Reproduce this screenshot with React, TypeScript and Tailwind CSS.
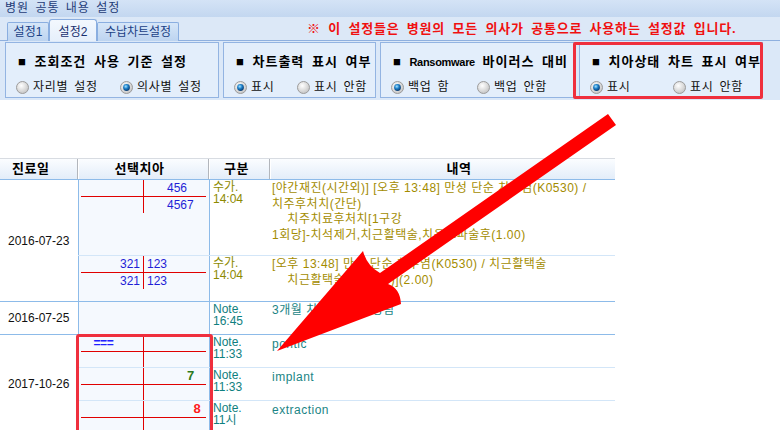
import React from "react";

type Mark = { n: number; c: string; cls?: string };

const Radio = ({ on = false }: { on?: boolean }) => (
  <svg width="13" height="13" viewBox="0 0 13 13" className="shrink-0">
    <defs>
      <radialGradient id="rbg" cx="40%" cy="35%" r="70%">
        <stop offset="0" stopColor="#ffffff" />
        <stop offset="1" stopColor="#c2c2c2" />
      </radialGradient>
      <radialGradient id="rdot" cx="40%" cy="35%" r="65%">
        <stop offset="0" stopColor="#a8e4ff" />
        <stop offset="0.5" stopColor="#1b7fc9" />
        <stop offset="1" stopColor="#0a3b70" />
      </radialGradient>
    </defs>
    <circle cx="6.5" cy="6.5" r="6" fill="url(#rbg)" stroke="#9c9c9c" />
    {on && <circle cx="6.5" cy="6.5" r="3.4" fill="url(#rdot)" />}
  </svg>
);

const Opt = ({ label, on, w }: { label: string; on?: boolean; w: string }) => (
  <div className={`flex items-center gap-[4px] ${w}`}>
    <Radio on={on} />
    <span className="whitespace-nowrap text-[12px] leading-[16px] tracking-[0.7px] text-[#111] [word-spacing:2px]">
      {label}
    </span>
  </div>
);

const Panel = ({
  title,
  a,
  b,
  aw,
  on,
  w,
}: {
  title: React.ReactNode;
  a: string;
  b: string;
  aw: string;
  on: 0 | 1;
  w: string;
}) => (
  <div className={`h-[56px] shrink-0 overflow-hidden border border-[#93b4e2] bg-[#e3eefb] pt-[11px] ${w}`}>
    <div className="ml-[12px] whitespace-nowrap text-[13px] font-bold leading-[16px] tracking-[1px] text-black [word-spacing:3px]">
      ■ {title}
    </div>
    <div className="mt-[9px] flex pl-[10px]">
      <Opt label={a} on={on === 0} w={aw} />
      <Opt label={b} on={on === 1} w="" />
    </div>
  </div>
);

const Quad = ({ marks = [], left = false }: { marks?: Mark[]; left?: boolean }) => (
  <div
    className={
      left
        ? "flex w-[63px] shrink-0 flex-row-reverse border-r border-[#e00000] pr-[3px]"
        : "flex w-[62px] shrink-0 pl-[3px]"
    }
  >
    {[1, 2, 3, 4, 5, 6, 7, 8].map((n) => {
      const m = marks.find((x) => x.n === n);
      return (
        <span key={n} className={`w-[6.67px] shrink-0 text-center ${m?.cls ?? "text-[#1f1fd6]"}`}>
          {m?.c}
        </span>
      );
    })}
  </div>
);

const Chart = ({ ul, ur, ll, lr }: { ul?: Mark[]; ur?: Mark[]; ll?: Mark[]; lr?: Mark[] }) => (
  <div className="ml-[2px] flex w-[125px] flex-col text-[12px] leading-[16px]">
    <div className="flex h-[16px]">
      <Quad left marks={ul} />
      <Quad marks={ur} />
    </div>
    <div className="h-px bg-[#e00000]" />
    <div className="flex h-[16px]">
      <Quad left marks={ll} />
      <Quad marks={lr} />
    </div>
  </div>
);

const m = (s: string, from: number): Mark[] => s.split("").map((c, i) => ({ n: from + i, c }));
const mr = (s: string): Mark[] =>
  s
    .split("")
    .reverse()
    .map((c, i) => ({ n: i + 1, c }));

type Sub = {
  h: string;
  chart: React.ReactNode;
  kind: string[];
  kindCls: string;
  text: React.ReactNode;
};

const Group = ({ date, subs }: { date: string; subs: Sub[] }) => (
  <div className="flex border-b border-[#8dbbe9]">
    <div className="flex w-[78px] shrink-0 items-center pl-[8px] text-[12px] text-[#111]">{date}</div>
    <div className="flex flex-1 flex-col">
      {subs.map((s, i) => (
        <div key={i} className={`flex ${s.h} ${i > 0 ? "border-t border-[#d3e6f8]" : ""}`}>
          <div className="w-[132px] shrink-0 border-x border-[#8dbbe9] bg-[#f5f9fe]">{s.chart}</div>
          <div className={`w-[60px] shrink-0 pl-[3px] pt-[1px] text-[12px] leading-[12px] ${s.kindCls}`}>
            {s.kind.map((k) => (
              <div key={k}>{k}</div>
            ))}
          </div>
          <div className="flex-1 whitespace-pre pl-[2px] pt-[1px] text-[12px] leading-[15.5px] tracking-[0.5px]">
            {s.text}
          </div>
        </div>
      ))}
    </div>
  </div>
);

const olive = "text-[#8d8a00]";
const teal = "text-[#0f8080]";

const App = () => {
  return (
    <div className="relative h-[430px] w-[780px] overflow-hidden bg-white font-['Liberation_Sans','Noto_Sans_CJK_KR',sans-serif]">
      {/* title */}
      <div className="h-[17px] bg-gradient-to-b from-[#d4e3f6] to-[#c3d7f0] pl-[5px] text-[12px] leading-[17px] tracking-[1px] text-[#1f3c78] [word-spacing:2px]">
        병원 공통 내용 설정
      </div>

      {/* tabs + notice */}
      <div className="flex h-[24px] border-b border-[#8fb0df] bg-[#dce8f7] pl-[7px]">
        <div className="mt-[5px] flex h-[19px] w-[42px] items-center justify-center rounded-t-[2px] border border-b-0 border-[#8aaee0] bg-gradient-to-b from-[#d6e6f8] to-[#bdd4f0] text-[12px] text-[#1a3f85]">
          설정1
        </div>
        <div className="mt-[2px] flex h-[22px] w-[48px] items-center justify-center rounded-t-[3px] border border-b-0 border-[#8aaee0] bg-gradient-to-b from-[#f3f8fe] to-[#e6effb] pt-[2px] text-[12px] text-[#1a3070]">
          설정2
        </div>
        <div className="mt-[5px] flex h-[19px] w-[82px] items-center justify-center rounded-t-[2px] border border-b-0 border-[#8aaee0] bg-gradient-to-b from-[#d6e6f8] to-[#bdd4f0] text-[12px] text-[#1a3f85]">
          수납차트설정
        </div>
        <div className="ml-[128px] mt-[4px] whitespace-nowrap text-[13px] font-bold leading-[16px] tracking-[0.8px] text-[#f01010] [word-spacing:3px]">
          ※ 이 설정들은 병원의 모든 의사가 공통으로 사용하는 설정값 입니다.
        </div>
      </div>

      {/* option panels */}
      <div className="relative flex h-[59px] gap-[4px] bg-[#dbe8f8] pl-[5px] pt-[1px]">
        <Panel w="w-[214px]" title="조회조건 사용 기준 설정" a="자리별 설정" b="의사별 설정" aw="w-[104px]" on={1} />
        <Panel w="w-[153px]" title="차트출력 표시 여부" a="표시" b="표시 안함" aw="w-[63px]" on={0} />
        <Panel
          w="w-[195px]"
          title={
            <>
              <span className="text-[11px] tracking-[-0.3px]">Ransomware</span> 바이러스 대비
            </>
          }
          a="백업 함"
          b="백업 안함"
          aw="w-[86px]"
          on={0}
        />
        <Panel w="w-[184px]" title="치아상태 차트 표시 여부" a="표시" b="표시 안함" aw="w-[83px]" on={0} />
        <div className="absolute left-[573px] top-[1px] h-[57px] w-[190px] rounded-[2px] border-[3px] border-[#ef2f3d]" />
      </div>

      {/* table */}
      <div className="mt-[58px] w-[615px]">
        <div className="flex h-[22px] border-b border-t border-b-[#8dbbe9] border-t-[#d8dce2] bg-gradient-to-b from-[#fbfdff] to-[#e3edf9] text-[13px] font-bold leading-[20px] tracking-[0.5px] text-black">
          <div className="w-[78px] shrink-0 border-r border-[#b2b6bc] pl-[12px]">진료일</div>
          <div className="w-[131px] shrink-0 border-l border-r border-l-white border-r-[#b2b6bc] pr-[8px] text-center">
            선택치아
          </div>
          <div className="w-[61px] shrink-0 border-l border-r border-l-white border-r-[#b2b6bc] pr-[6px] text-center">
            구분
          </div>
          <div className="flex-1 border-l border-white pl-[32px] text-center">내역</div>
        </div>

        <Group
          date="2016-07-23"
          subs={[
            {
              h: "h-[75px]",
              chart: <Chart ur={m("456", 4)} lr={m("4567", 4)} />,
              kind: ["수가.", "14:04"],
              kindCls: olive,
              text: (
                <div className="text-[#a38c00]">
                  <div>[야간재진(시간외)] [오후 13:48] 만성 단순 치주염(K0530) /</div>
                  <div>치주후처치(간단)</div>
                  <div>{"    치주치료후처치[1구강"}</div>
                  <div>1회당]-치석제거,치근활택술,치은소파술후(1.00)</div>
                </div>
              ),
            },
            {
              h: "h-[46px]",
              chart: <Chart ul={mr("321")} ur={m("123", 1)} ll={mr("321")} lr={m("123", 1)} />,
              kind: ["수가.", "14:04"],
              kindCls: olive,
              text: (
                <div className="text-[#a38c00]">
                  <div>[오후 13:48] 만성 단순 치주염(K0530) / 치근활택술</div>
                  <div>{"    치근활택술(1/3악당)](2.00)"}</div>
                </div>
              ),
            },
          ]}
        />
        <Group
          date="2016-07-25"
          subs={[
            {
              h: "h-[32px]",
              chart: null,
              kind: ["Note.", "16:45"],
              kindCls: teal,
              text: <div className="text-[#1b8585]">3개월 치주 검진 예정됨</div>,
            },
          ]}
        />
        <Group
          date="2017-10-26"
          subs={[
            {
              h: "h-[32px]",
              chart: <Chart ul={[5, 6, 7].map((n) => ({ n, c: "=", cls: "font-bold text-[#2020ff]" }))} />,
              kind: ["Note.", "11:33"],
              kindCls: teal,
              text: <div className="pt-[1px] text-[#1b8585]">pontic</div>,
            },
            {
              h: "h-[33px]",
              chart: <Chart ur={[{ n: 7, c: "7", cls: "font-bold text-[13px] text-[#2d7a1c]" }]} />,
              kind: ["Note.", "11:33"],
              kindCls: teal,
              text: <div className="pt-[1px] text-[#1b8585]">implant</div>,
            },
            {
              h: "h-[33px]",
              chart: <Chart ur={[{ n: 8, c: "8", cls: "font-bold text-[13px] text-[#ff1a1a]" }]} />,
              kind: ["Note.", "11시"],
              kindCls: teal,
              text: <div className="pt-[1px] text-[#1b8585]">extraction</div>,
            },
          ]}
        />
      </div>

      {/* annotation: red box around tooth chart */}
      <div className="absolute left-[76px] top-[334px] h-[100px] w-[137px] rounded-[3px] border-[3px] border-[#ef2f3d]" />

      {/* annotation: arrow */}
      <svg className="pointer-events-none absolute left-0 top-0" width="780" height="430" viewBox="0 0 780 430">
        <path
          d="M608 114 L616 125 L388 284 Q400 288 401 304 L277 351 L363 251 Q367 266 380 273 Z"
          fill="#ff0000"
        />
      </svg>
    </div>
  );
};

export default App;
